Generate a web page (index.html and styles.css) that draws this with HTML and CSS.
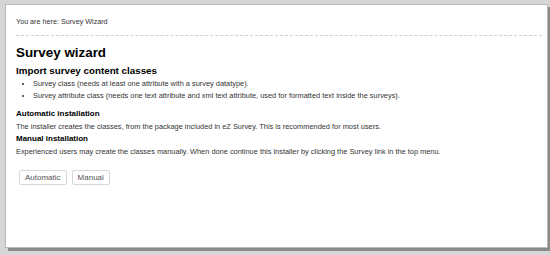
FILE: index.html
```html
<!DOCTYPE html>
<html>
<head>
<meta charset="utf-8">
<link rel="stylesheet" href="styles.css">
</head>
<body>
<div class="frame">
  <div class="panel">
    <div class="path">You are here: Survey Wizard</div>
    <div class="content">
      <h1 class="title">Survey wizard</h1>
      <h2 class="subtitle">Import survey content classes</h2>
      <ul class="list">
        <li>Survey class (needs at least one attribute with a survey datatype).</li>
        <li>Survey attribute class (needs one text attribute and xml text attribute, used for formatted text inside the surveys).</li>
      </ul>
      <h3 class="section">Automatic installation</h3>
      <p class="text">The installer creates the classes, from the package included in eZ Survey. This is recommended for most users.</p>
      <h3 class="section section-next">Manual installation</h3>
      <p class="text">Experienced users may create the classes manually. When done continue this installer by clicking the Survey link in the top menu.</p>
      <div class="buttons">
        <button class="btn">Automatic</button>
        <button class="btn">Manual</button>
      </div>
    </div>
  </div>
</div>
</body>
</html>
```
FILE: styles.css
```css
html, body {
  margin: 0;
  padding: 0;
}
body {
  width: 550px;
  height: 255px;
  background: #d6d6d6;
  font-family: "Liberation Sans", Arial, sans-serif;
  color: #222;
  overflow: hidden;
}
.frame {
  padding: 4px 0 0 5px;
}
.panel {
  width: 526px;
  height: 234px;
  background: #fff;
  border: 1px solid #b8b8b8;
  box-shadow: 3px 3px 0 #8a8a8a;
  padding: 0 5px 8px 10px;
}
.path {
  font-size: 7.2px;
  color: #333;
  padding: 12px 0 9px 0;
  border-bottom: 1px dashed #cfcfcf;
}
.content {
  padding-top: 8px;
}
.title {
  margin: 0;
  font-size: 13.4px;
  font-weight: bold;
  color: #000;
  line-height: 18px;
}
.subtitle {
  margin: 2px 0 0 0;
  font-size: 9.8px;
  font-weight: bold;
  color: #000;
  line-height: 14px;
}
.list {
  margin: 0;
  padding-left: 17px;
  font-size: 7.4px;
  line-height: 12px;
  color: #333;
}
.section {
  margin: 6px 0 0 0;
  font-size: 8px;
  font-weight: bold;
  color: #000;
  line-height: 11px;
}
.section-next {
  margin-top: 1.5px;
}
.text {
  margin: 2.5px 0 0 0;
  font-size: 7.4px;
  line-height: 10px;
  color: #333;
}
.buttons {
  display: flex;
  gap: 5px;
  margin-top: 13px;
  padding-left: 3px;
}
.btn {
  font-family: "Liberation Sans", Arial, sans-serif;
  font-size: 8px;
  color: #555;
  background: #fff;
  border: 1px solid #d8d8d8;
  border-radius: 2px;
  padding: 0 5px;
  height: 15px;
}
```
